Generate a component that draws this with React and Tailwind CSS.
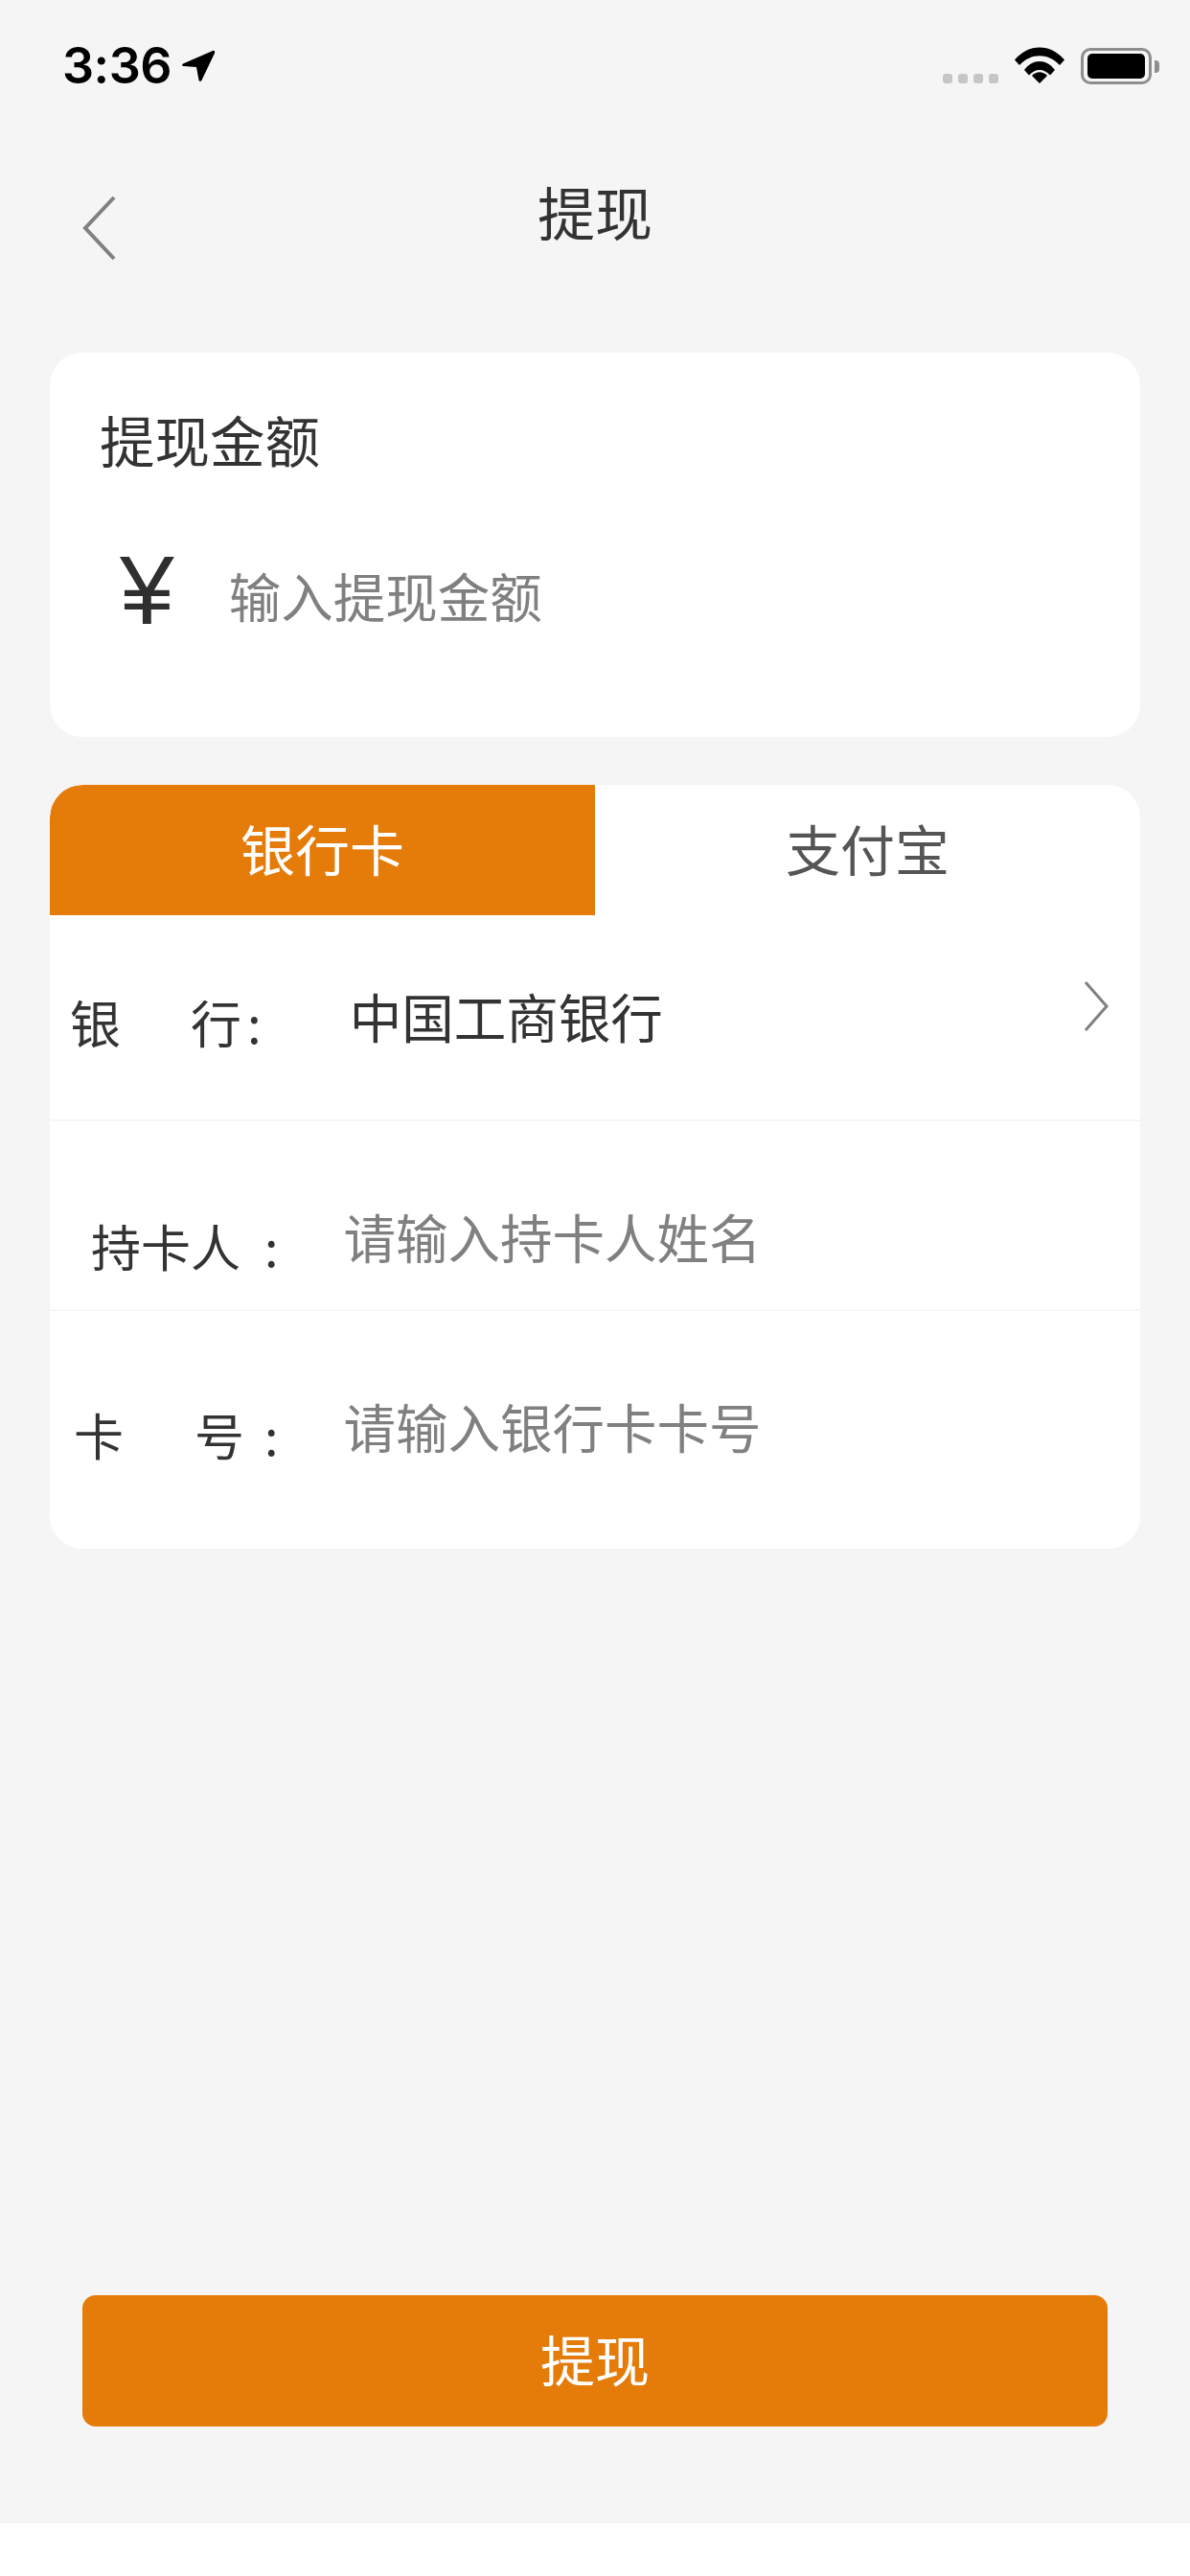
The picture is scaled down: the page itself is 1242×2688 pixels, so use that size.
import React from "react";

const CJK = "font-['Noto_Sans_CJK_SC','Noto_Sans_CJK_JP',sans-serif]";

const StatusBar = () => (
  <div className="flex h-[100px] shrink-0 items-start justify-between pl-[65px] pr-[32px] pt-[38px]">
    <div className="flex items-start">
      <span className="font-['Inter',sans-serif] text-[52px] font-semibold leading-[62px] tracking-[-0.5px] text-black">
        3:36
      </span>
      <svg className="ml-[10px] mt-[13px]" width="36" height="35" viewBox="0 0 36 35">
        <path
          d="M33 2 2 15.500c-1.500.8-1 2.500.5 2.500L16 19l2.500 13.500c.3 1.800 2.300 1.800 3 .3L35 4.500C35.700 2.500 34.500 1.300 33 2Z"
          fill="#000"
        />
      </svg>
    </div>
    <div className="flex items-start">
      <div className="mt-[39px] flex gap-[6px]">
        <span className="h-[10px] w-[10px] rounded-[3px] bg-[#c6c6c6]" />
        <span className="h-[10px] w-[10px] rounded-[3px] bg-[#c6c6c6]" />
        <span className="h-[10px] w-[10px] rounded-[3px] bg-[#c6c6c6]" />
        <span className="h-[10px] w-[10px] rounded-[3px] bg-[#c6c6c6]" />
      </div>
      <svg className="ml-[17px] mt-[11px]" width="52" height="38" viewBox="0 0 52 38">
        <path d="M0 13.500C14-4 38-4 52 13.500L47 19C35 6 17 6 5 19Z" fill="#000" />
        <path d="M10 24C19 12 33 12 42 24L37 29.500C31 22 21 22 15 29.500Z" fill="#000" />
        <path d="M18 30C23 25 29 25 34 30L26 38Z" fill="#000" />
      </svg>
      <div className="ml-[17px] mt-[12px] flex items-center">
        <div className="flex h-[38px] w-[74px] items-center justify-center rounded-[10px] border-[3px] border-[#8e8e8e]">
          <div className="h-[26px] w-[60px] rounded-[5px] bg-black" />
        </div>
        <div className="ml-[3px] h-[13px] w-[5px] rounded-r-[4px] bg-[#8e8e8e]" />
      </div>
    </div>
  </div>
);

const Header = () => (
  <div className="grid h-[268px] shrink-0 grid-cols-[1fr_auto_1fr] items-start">
    <svg className="ml-[85px] mt-[103px]" width="38" height="70" viewBox="0 0 38 70">
      <path d="M34 3 4 35l30 32" fill="none" stroke="#808080" strokeWidth="4" />
    </svg>
    <h1 className={`${CJK} mt-[85px] text-[60px] font-normal leading-[70px] text-[#333]`}>提现</h1>
  </div>
);

const AmountCard = () => (
  <div className="mx-[52px] h-[401px] shrink-0 rounded-[34px] bg-white pl-[52px] pt-[55px]">
    <div className={`${CJK} text-[57.5px] leading-[70px] text-[#333]`}>提现金额</div>
    <div className="mt-[73px] flex items-start">
      <span className="ml-[21px] font-['Liberation_Sans',sans-serif] text-[102px] leading-[100px] text-[#2f2f2f]">¥</span>
      <span className={`${CJK} ml-[57px] mt-[20px] text-[54.5px] leading-[70px] text-[#808080]`}>输入提现金额</span>
    </div>
  </div>
);

const Tabs = () => (
  <div className={`${CJK} grid h-[136px] grid-cols-2 text-[57px]`}>
    <div className="flex items-center justify-center rounded-tl-[34px] bg-[#e57b08] pb-[5px] text-white">银行卡</div>
    <div className="flex items-center justify-center pb-[5px] text-[#555]">支付宝</div>
  </div>
);

const BankForm = () => (
  <div className={`${CJK} text-[#333]`}>
    <div className="flex h-[215px] items-start border-b-2 border-[#f6f6f6]">
      <div className="ml-[21px] mt-[80px] flex items-center text-[53px] leading-[62px]">
        <span>银</span>
        <span className="ml-[73px]">行</span>
        <span className="ml-[6px]">:</span>
      </div>
      <span className="ml-[92px] mt-[74px] text-[54.5px] leading-[62px]">中国工商银行</span>
      <svg className="ml-auto mr-[32px] mt-[68px]" width="28" height="54" viewBox="0 0 28 54">
        <path d="M3 2 25 27 3 52" fill="none" stroke="#808080" strokeWidth="3" />
      </svg>
    </div>
    <div className="flex h-[198px] items-start border-b-2 border-[#f6f6f6]">
      <div className="ml-[43px] mt-[99px] flex text-[52px] leading-[62px]">
        <span>持卡人</span>
        <span className="ml-[25px]">:</span>
      </div>
      <span className="ml-[68px] mt-[89px] text-[54.5px] leading-[62px] text-[#808080]">请输入持卡人姓名</span>
    </div>
    <div className="flex h-[248px] items-start">
      <div className="ml-[25px] mt-[98px] flex text-[52px] leading-[62px]">
        <span>卡</span>
        <span className="ml-[74px]">号</span>
        <span className="ml-[21px]">:</span>
      </div>
      <span className="ml-[68px] mt-[89px] text-[54.5px] leading-[62px] text-[#808080]">请输入银行卡卡号</span>
    </div>
  </div>
);

const App = () => {
  return (
    <div className="h-[2688px] w-[1242px] overflow-hidden bg-white">
      <div className="flex h-[2633px] flex-col bg-[#f5f5f5]">
        <StatusBar />
        <Header />
        <AmountCard />
        <div className="mx-[52px] mt-[50px] shrink-0 overflow-hidden rounded-[34px] bg-white">
          <Tabs />
          <BankForm />
        </div>
        <button
          className={`${CJK} mx-[86px] mb-[101px] mt-auto h-[137px] shrink-0 rounded-[14px] bg-[#e57b08] pb-[6px] text-[57px] text-white`}
        >
          提现
        </button>
      </div>
    </div>
  );
};

export default App;
